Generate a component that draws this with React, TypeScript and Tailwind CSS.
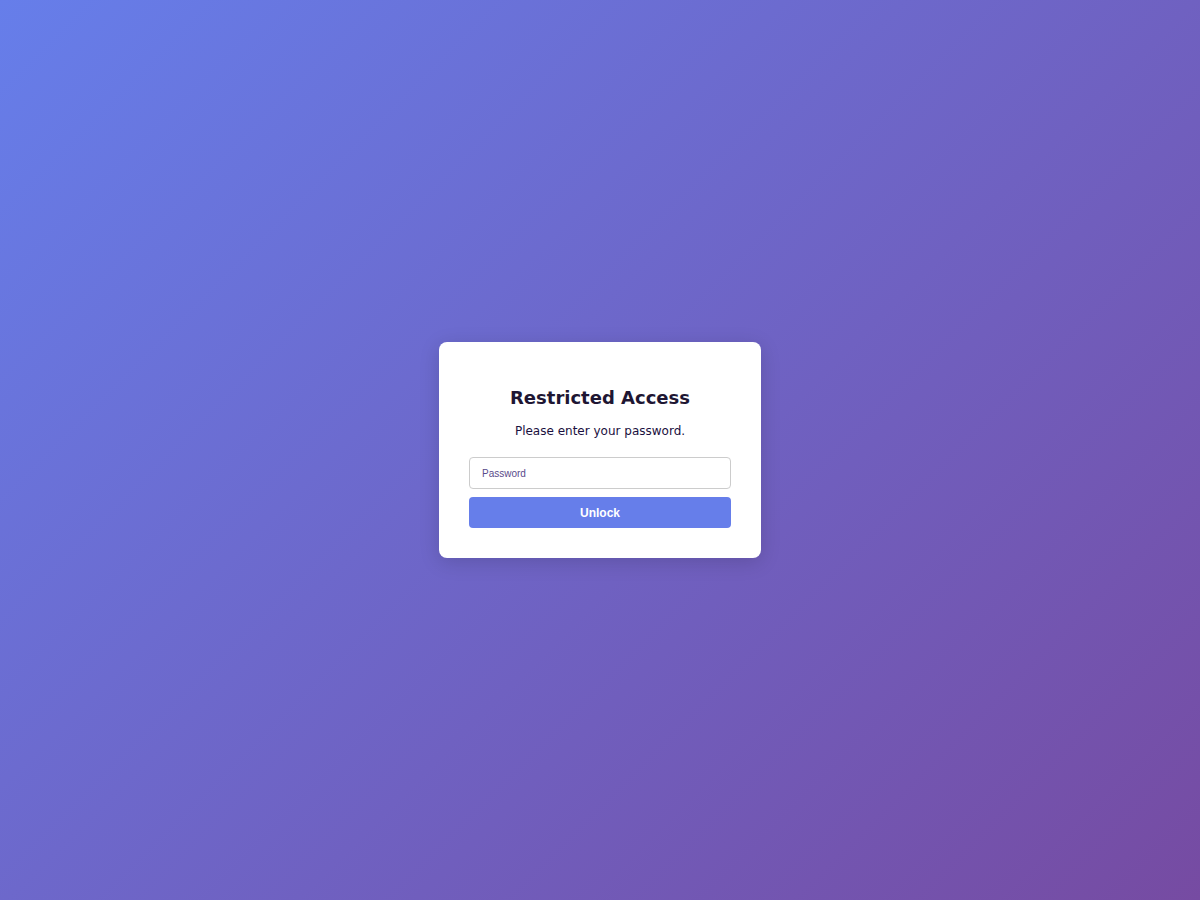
import React from "react";

export default function App() {
  return (
    <div className="min-h-screen w-full flex items-center justify-center bg-[linear-gradient(135deg,#667eea_0%,#764ba2_100%)]">
      <div className="w-[322px] bg-white rounded-[8px] px-[30px] pt-[45px] pb-[30px] shadow-[0_4px_20px_rgba(0,0,0,0.15)] flex flex-col items-center">
        <h2 className="text-[18px] leading-[22px] font-bold text-[#1e1633] font-['DejaVu_Sans',sans-serif]">
          Restricted Access
        </h2>
        <p className="mt-[14px] text-[12px] leading-[16px] text-[#1a1040] font-['DejaVu_Sans',sans-serif]">
          Please enter your password.
        </p>
        <input
          type="password"
          placeholder="Password"
          className="mt-[18px] w-full h-[32px] border border-[#cccccc] rounded-[4px] px-[12px] text-[10px] font-['Liberation_Sans',Arial,sans-serif] placeholder:text-[#5a4a8a] outline-none"
        />
        <button className="mt-[8px] w-full h-[31px] bg-[#667eea] rounded-[4px] text-white text-[12px] font-bold font-['Liberation_Sans',Arial,sans-serif]">
          Unlock
        </button>
      </div>
    </div>
  );
}
